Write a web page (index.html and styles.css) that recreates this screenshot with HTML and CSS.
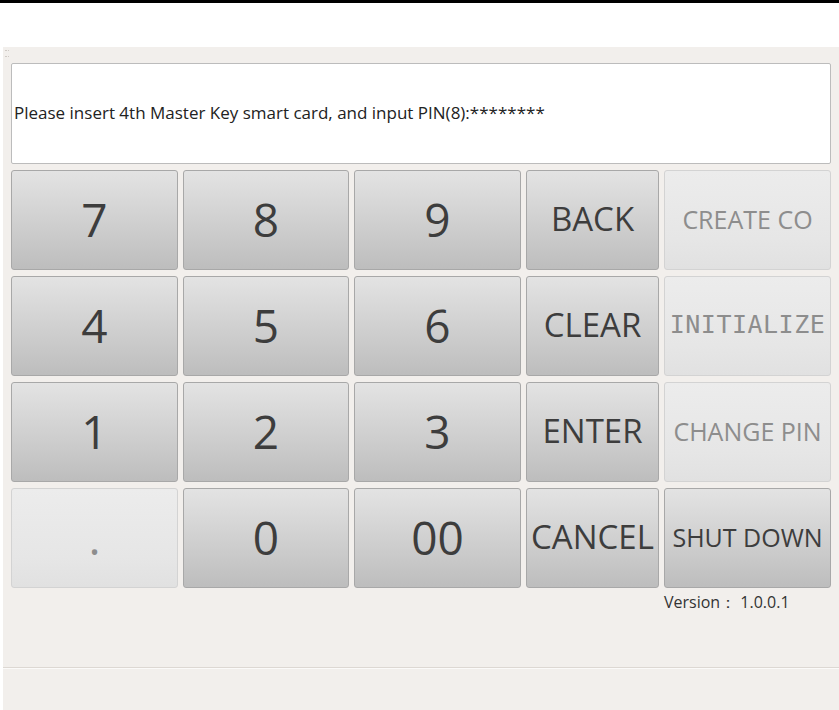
FILE: index.html
```html
<!DOCTYPE html>
<html lang="en">
<head>
    <meta charset="UTF-8">
    <title>Master Key</title>
    <link rel="stylesheet" href="styles.css">
</head>
<body>
    <div class="topbar"></div>
    <div class="panel">
        <div class="grip"></div>
        <div class="message">Please insert 4th Master Key smart card, and input PIN(8):********</div>
        <div class="keypad">
            <button class="key digit">7</button>
            <button class="key digit">8</button>
            <button class="key digit">9</button>
            <button class="key word">BACK</button>
            <button class="key side" disabled>CREATE CO</button>

            <button class="key digit">4</button>
            <button class="key digit">5</button>
            <button class="key digit">6</button>
            <button class="key word">CLEAR</button>
            <button class="key side mono" disabled>INITIALIZE</button>

            <button class="key digit">1</button>
            <button class="key digit">2</button>
            <button class="key digit">3</button>
            <button class="key word">ENTER</button>
            <button class="key side" disabled>CHANGE PIN</button>

            <button class="key digit" disabled>.</button>
            <button class="key digit">0</button>
            <button class="key digit">00</button>
            <button class="key word">CANCEL</button>
            <button class="key side">SHUT DOWN</button>
        </div>
        <div class="version">Version：&nbsp;1.0.0.1</div>
        <div class="footer"></div>
    </div>
</body>
</html>
```
FILE: styles.css
```css
body {
    margin: 0;
    background: #fff;
    font-family: "Open Sans", "Noto Sans", sans-serif;
    height: 710px;
    overflow: hidden;
}
.topbar {
    height: 3px;
    background: #000;
}
.panel {
    position: relative;
    margin: 44px 0 0 3px;
    height: 663px;
    background: #f2efec;
    padding: 16px 8px 0 8px;
    box-sizing: border-box;
}
.grip {
    position: absolute;
    left: 2px;
    top: 3px;
    width: 4px;
    height: 5px;
    border-top: 1px dotted #cfcac5;
    border-bottom: 1px dotted #cfcac5;
}
.message {
    height: 101px;
    width: 820px;
    box-sizing: border-box;
    background: #fff;
    border: 1px solid #bcbcbc;
    border-radius: 2px;
    display: flex;
    align-items: center;
    padding: 0 0 3px 2px;
    font-size: 17px;
    color: #222;
}
.keypad {
    display: grid;
    grid-template-columns: 167px 166px 167px 133px 167px;
    grid-auto-rows: 100px;
    column-gap: 5px;
    row-gap: 6px;
    margin-top: 6px;
    width: 820px;
}
.key {
    margin: 0;
    padding: 0 0 3px 0;
    border: 1px solid #a8a8a8;
    border-radius: 3px;
    background: linear-gradient(#e3e3e3, #c9c9c9 70%, #bdbdbd);
    color: #3d3d3d;
    font-family: "Open Sans", "Noto Sans", sans-serif;
    white-space: nowrap;
    overflow: hidden;
}
.key:disabled {
    border-color: #d3d3d3;
    background: linear-gradient(#ececec, #e6e6e6 70%, #e1e1e1);
    color: #8d8d8d;
}
.digit {
    font-size: 46px;
}
.word {
    font-size: 33px;
}
.side {
    font-size: 25px;
}
.mono {
    font-family: "DejaVu Sans Mono", monospace;
    font-size: 25px;
    letter-spacing: 0.5px;
}
.version {
    margin: 3px 0 0 653px;
    font-size: 16px;
    color: #333;
}
.footer {
    position: absolute;
    left: 0;
    right: 0;
    top: 620px;
    border-top: 1px solid #ddd8d3;
    border-bottom: 1px solid #fbfaf9;
}
```
